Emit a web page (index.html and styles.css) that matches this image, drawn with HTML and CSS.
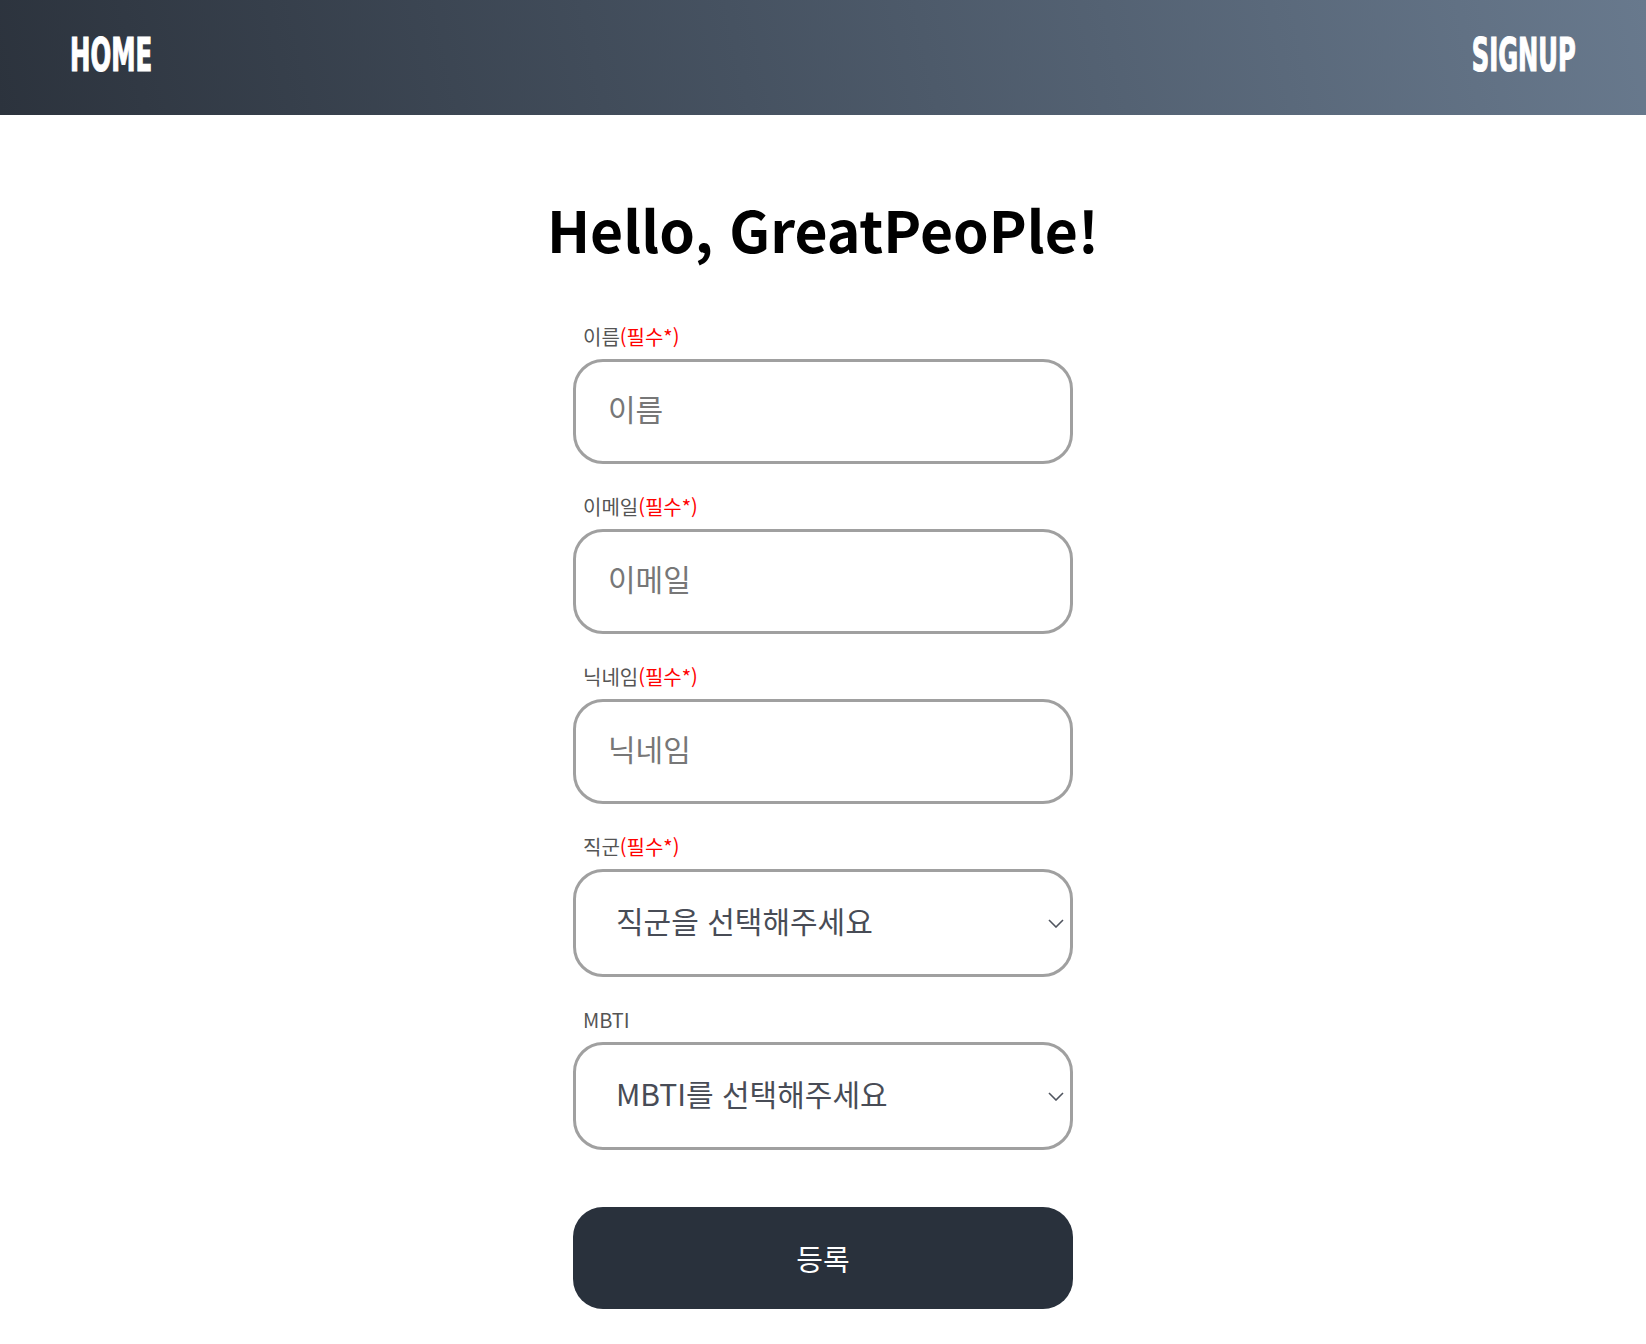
FILE: index.html
```html
<!DOCTYPE html>
<html lang="ko">
<head>
  <meta charset="UTF-8" />
  <meta name="viewport" content="width=device-width, initial-scale=1.0" />
  <title>GreatPeoPle - Signup</title>
  <link rel="stylesheet" href="styles.css">
</head>
<body>
  <!-- Top navigation -->
  <div class="heading-bar">
    <a href="#" class="nav-link nav-home">HOME</a>
    <a href="#" class="nav-link nav-signup">SIGNUP</a>
  </div>

  <div class="container">
    <h1 class="title">Hello, GreatPeoPle!</h1>

    <form class="signup-form" onsubmit="return false;">
      <div class="form-group">
        <label for="name">이름<span class="required">(필수*)</span></label>
        <input type="text" id="name" placeholder="이름" />
      </div>

      <div class="form-group">
        <label for="email">이메일<span class="required">(필수*)</span></label>
        <input type="text" id="email" placeholder="이메일" />
      </div>

      <div class="form-group">
        <label for="nickname">닉네임<span class="required">(필수*)</span></label>
        <input type="text" id="nickname" placeholder="닉네임" />
      </div>

      <div class="form-group">
        <label for="job">직군<span class="required">(필수*)</span></label>
        <div class="select-wrap">
          <select id="job">
            <option value="">직군을 선택해주세요</option>
            <option value="fe">프론트엔드</option>
            <option value="be">백엔드</option>
            <option value="design">디자인</option>
          </select>
          <svg class="chevron" width="16" height="9" viewBox="0 0 16 9"><path d="M1 1 L8 8 L15 1" fill="none" stroke="#50555f" stroke-width="1.6"/></svg>
        </div>
      </div>

      <div class="form-group">
        <label for="mbti">MBTI</label>
        <div class="select-wrap">
          <select id="mbti">
            <option value="">MBTI를 선택해주세요</option>
            <option>INTJ</option>
            <option>ENFP</option>
            <option>ISTP</option>
          </select>
          <svg class="chevron" width="16" height="9" viewBox="0 0 16 9"><path d="M1 1 L8 8 L15 1" fill="none" stroke="#50555f" stroke-width="1.6"/></svg>
        </div>
      </div>

      <button type="submit" class="submit-btn">등록</button>
    </form>
  </div>
</body>
</html>
```

FILE: styles.css
```css
/* Base Styles */
body {
  margin: 0;
  font-family: "Noto Sans CJK KR", "Noto Sans", sans-serif;
  background-color: #ffffff;
  color: #333;
}

/* Header */
.heading-bar {
  height: 115px;
  padding: 0 70px;
  display: flex;
  justify-content: space-between;
  align-items: center;
  background: linear-gradient(78deg, #2c333d 0%, #465261 45%, #68798d 100%);
}
.nav-link {
  display: inline-block;
  font-family: "DejaVu Sans Condensed", "DejaVu Sans", sans-serif;
  font-weight: bold;
  font-size: 46px;
  line-height: 1;
  color: #ffffff;
  text-decoration: none;
  -webkit-text-stroke: 1.2px #ffffff;
  margin-top: -6px;
}
.nav-home {
  transform: scaleX(0.59);
  transform-origin: left center;
}
.nav-signup {
  transform: scaleX(0.585);
  transform-origin: right center;
}

/* Content */
.container {
  display: flex;
  flex-direction: column;
  align-items: center;
}
.title {
  margin: 72px 0 0;
  font-size: 57px;
  font-weight: 700;
  line-height: normal;
  color: #000;
  text-align: center;
}
.signup-form {
  width: 500px;
  margin-top: 53px;
  display: flex;
  flex-direction: column;
}
.form-group {
  display: flex;
  flex-direction: column;
  margin-bottom: 28px;
}
.form-group label {
  font-size: 20px;
  line-height: 29px;
  padding-left: 10px;
  margin-bottom: 8px;
  color: #555;
}
.required {
  color: #ff0000;
}
.form-group input,
.form-group select {
  box-sizing: border-box;
  width: 100%;
  height: 105px;
  border: 3px solid #a0a0a0;
  border-radius: 30px;
  background: #fff;
  font-family: inherit;
  font-size: 30px;
  outline: none;
}
.form-group input {
  padding: 0 32px 8px;
  color: #333;
}
.form-group input::placeholder {
  color: #777;
}
.form-group select {
  -webkit-appearance: none;
  appearance: none;
  height: 108px;
  padding: 0 40px 6px;
  color: #484c56;
}
.select-wrap {
  position: relative;
}
.chevron {
  position: absolute;
  right: 9px;
  top: 50%;
  margin-top: -4px;
  pointer-events: none;
}
.submit-btn {
  margin-top: 29px;
  height: 102px;
  border: none;
  border-radius: 30px;
  background-color: #29313c;
  color: #fff;
  font-family: inherit;
  font-size: 29px;
  cursor: pointer;
}
.submit-btn:hover {
  background-color: #1f252e;
}
```
